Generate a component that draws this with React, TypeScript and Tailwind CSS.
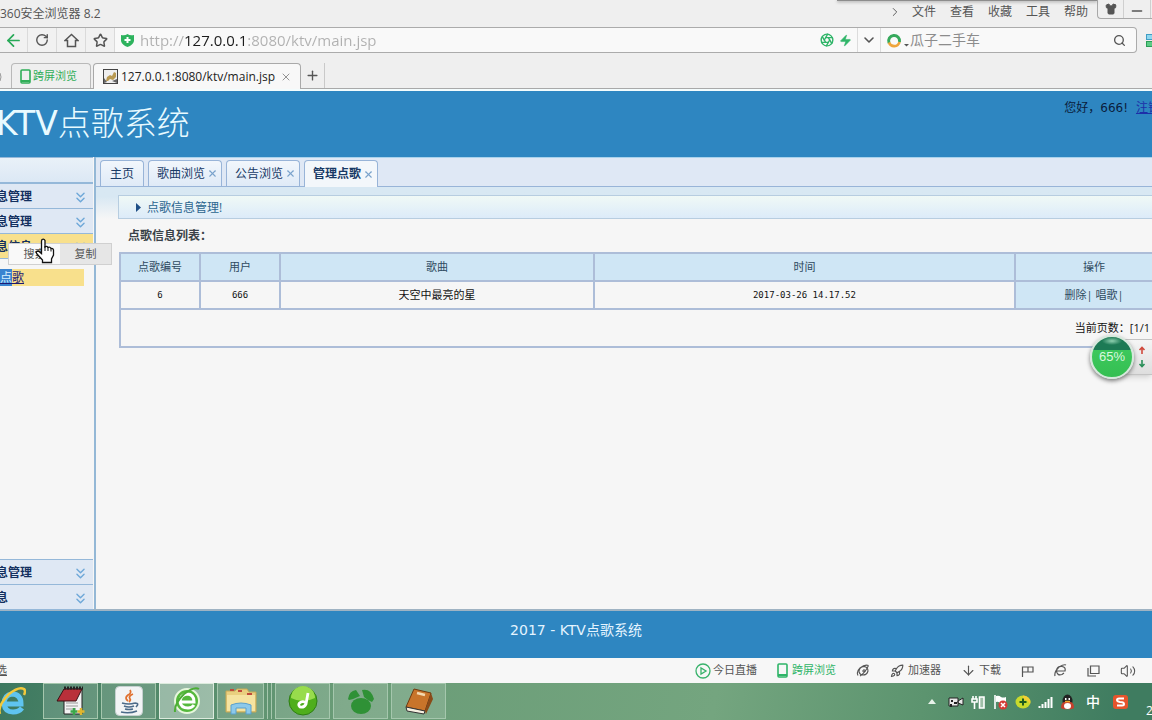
import type { ReactNode } from 'react';
import {
  Aperture, ArrowDown, ArrowLeft, ChevronDown, ChevronRight, ChevronsDown, Minus,
  Plus, Rocket, RotateCw, Search, Shirt, Star, Volume2, X, Zap,
} from 'lucide-react';

// ─────────────────────────────────────────────────────────────────────────────
// KTV song request console, shown inside a browser window on a desktop.
// ─────────────────────────────────────────────────────────────────────────────

const MENU = ['文件', '查看', '收藏', '工具', '帮助'];

const PAGE_TABS = [
  { title: '主页', closable: false },
  { title: '歌曲浏览', closable: true },
  { title: '公告浏览', closable: true },
  { title: '管理点歌', closable: true, active: true },
];

const ROWS = [{ id: '6', user: '666', song: '天空中最亮的星', time: '2017-03-26 14.17.52' }];

export default function App() {
  return (
    <div className="flex min-h-screen flex-col overflow-hidden bg-[#f6f6f6] font-['Open_Sans','Noto_Sans_CJK_SC',sans-serif] text-xs text-[#555]">
      <TitleBar />
      <AddressBar />
      <BrowserTabs />
      <PageHeader />
      <main className="relative flex flex-1 border-b-2 border-[#9fb3c3]">
        <Sidebar />
        <Workspace />
        <SpeedBall />
      </main>
      <footer className="flex h-[47px] items-start justify-center bg-[#2e86c1] pt-[9px] font-['DejaVu_Sans','Noto_Sans_CJK_SC',sans-serif] text-sm leading-5 text-[#e4f4ff]">
        2017 - KTV点歌系统
      </footer>
      <StatusBar />
      <Taskbar />
    </div>
  );
}

/* ── browser chrome ───────────────────────────────────────────────────────── */

function TitleBar() {
  return (
    <div className="relative flex h-[27px] justify-between bg-[#efefef]">
      <span className="self-center">360安全浏览器 8.2</span>
      <nav className="flex">
        <div className="flex items-center gap-[14px] pb-1 pr-[9px]">
          <ChevronRight size={14} strokeWidth={1.6} className="-mr-1" />
          {MENU.map((m) => <button key={m} type="button">{m}</button>)}
        </div>
        <div className="flex h-[19px] rounded-bl border-b border-l border-[#a8a8a8]">
          <button type="button" aria-label="皮肤" className="flex w-[26px] items-center justify-center border-r border-[#cfcfcf]">
            <Shirt size={12} fill="currentColor" />
          </button>
          <button type="button" aria-label="最小化" className="flex w-[27px] items-center justify-center border-r border-[#cfcfcf] pt-1">
            <Minus size={16} strokeWidth={2} />
          </button>
          <span className="w-px" />
        </div>
      </nav>
      <span className="absolute right-[55px] top-0 h-px w-[260px] bg-[#8d8d8d] shadow-[0_1px_3px_#777]" />
    </div>
  );
}

function NavButton({ label, children }: { label: string; children: ReactNode }) {
  return (
    <button type="button" aria-label={label} className="flex w-[29px] items-center justify-center border-r border-[#dadada] bg-[#f1f1f1]">
      {children}
    </button>
  );
}

function AddressBar() {
  return (
    <div className="flex h-[26px] bg-[#efefef]">
      <div className="flex flex-1 rounded-r-sm border-y border-r border-[#ababab] bg-[#f9f9f9]">
        <div className="-ml-px flex">
          <NavButton label="后退"><ArrowLeft size={19} strokeWidth={2.2} className="text-[#27a957]" /></NavButton>
          <NavButton label="刷新"><RotateCw size={14} strokeWidth={2.4} /></NavButton>
          <NavButton label="首页">
            <svg width="15" height="15" viewBox="0 0 15 15" fill="none" stroke="currentColor" strokeWidth="1.500">
              <path d="M1 7.500L7.500 1.500L14 7.500H11.500V13.500H3.500V7.500Z" />
            </svg>
          </NavButton>
          <NavButton label="收藏"><Star size={15} strokeWidth={2.4} /></NavButton>
        </div>
        <svg width="13" height="13" viewBox="0 0 13 13" className="ml-[6px] self-center">
          <path d="M0 1Q4 2 6.500 0Q9 2 13 1V7Q12 11 6.500 13Q1 11 0 7Z" fill="#2eb35e" />
          <path d="M6.500 3V9M3.500 6H9.500" stroke="#fff" strokeWidth="2" />
        </svg>
        <input
          aria-label="地址"
          defaultValue="http://127.0.0.1:8080/ktv/main.jsp"
          className="ml-[6px] min-w-0 flex-1 bg-[linear-gradient(90deg,#b0b0b0_45px,#1c1c1c_45px,#1c1c1c_106px,#b0b0b0_106px)] bg-clip-text text-[15px] text-transparent outline-none"
        />
        <div className="flex items-center gap-[5px] pr-[5px] text-[#2fb568]">
          <Aperture size={14} strokeWidth={2.4} />
          <Zap size={13} fill="currentColor" strokeWidth={1} />
        </div>
        <button type="button" aria-label="展开" className="flex w-6 items-center justify-center border-x border-[#dcdcdc]">
          <ChevronDown size={16} strokeWidth={2.4} />
        </button>
        <svg width="24" height="16" viewBox="0 0 24 16" className="ml-[5px] self-center">
          <path d="M3 11A5.500 5.500 0 1 1 13.500 10" fill="none" stroke="#36a95c" strokeWidth="3" />
          <path d="M3 10.500A5.500 5.500 0 0 0 13.500 10" fill="none" stroke="#efa53c" strokeWidth="2.600" />
          <path d="M18 12H23L20.500 14.500Z" fill="#555" />
        </svg>
        <input aria-label="搜索" defaultValue="瓜子二手车" className="w-[193px] bg-transparent text-sm text-[#8c8c8c] outline-none" />
        <button type="button" aria-label="开始搜索" className="flex w-[33px] items-center justify-center">
          <Search size={13} strokeWidth={2.4} />
        </button>
      </div>
      <div className="ml-[9px] flex w-[6px] flex-col justify-center gap-px">
        <span className="h-[6px] border border-r-0 border-[#3f9dc4] bg-[#8fd7ef]" />
        <span className="h-[6px] border border-r-0 border-[#2a9d56] bg-[#5ccb85]" />
      </div>
    </div>
  );
}

function PhoneIcon() {
  return (
    <svg width="11" height="15" viewBox="0 0 11 15" fill="none" stroke="currentColor">
      <rect x="1" y="1" width="9" height="13" rx="1" strokeWidth="1.600" />
      <path d="M1 12H10" strokeWidth="2" />
    </svg>
  );
}

function BrowserTabs() {
  return (
    <div className="flex h-[38px] items-end border-b-2 border-[#f3fcfd] bg-[#efefef]">
      <div className="flex h-[26px] flex-1 border-b border-[#a9a9a9]">
        <svg width="11" height="26" viewBox="0 0 11 26"><path d="M0 10Q2 14 0 18" fill="none" stroke="#999" /></svg>
        <button type="button" className="flex w-20 items-center gap-[2px] rounded-t border border-b-0 border-[#b9b9b9] px-2 text-[11px] text-[#2fae58]">
          <PhoneIcon />跨屏浏览
        </button>
        <div className="-mb-px ml-[2px] flex w-[208px] items-center rounded-t border border-b-0 border-[#a9a9a9] bg-[#f8f8f8] pl-[9px] pr-2 text-[#222]">
          <svg width="15" height="15" viewBox="0 0 15 15">
            <rect x=".5" y=".5" width="14" height="14" fill="#efefef" stroke="#444" />
            <path d="M3 12L4 8L7 6L9 7L11 3L13 4V8L10 11L7 10L5 12Z" fill="#b99a52" />
            <path d="M1 14V9L4 13ZM9 12L14 10V14Z" fill="#666" />
          </svg>
          <span className="ml-[3px] flex-1">127.0.0.1:8080/ktv/main.jsp</span>
          <button type="button" aria-label="关闭标签"><X size={12} strokeWidth={1.8} className="text-[#888]" /></button>
        </div>
        <button type="button" aria-label="新标签" className="flex w-6 items-center justify-center border-r border-[#c9c9c9]">
          <Plus size={15} strokeWidth={2.2} />
        </button>
      </div>
    </div>
  );
}

/* ── KTV page ─────────────────────────────────────────────────────────────── */

function PageHeader() {
  return (
    <header className="flex h-[66px] items-start justify-between overflow-hidden bg-[#2e86c1] font-['DejaVu_Sans','Noto_Sans_CJK_SC',sans-serif]">
      <h1 className="-ml-1 pt-[9px] text-[33px] font-light leading-[48px] text-[#e8faff]">
        <span className="font-normal">KTV</span>点歌系统
      </h1>
      <p className="-mr-2 flex gap-2 pt-[9px] leading-4 text-[#0a1c3c]">
        <span>您好，666!</span>
        <a href="#logout" className="text-[#1d2fa8] underline">注销</a>
      </p>
    </header>
  );
}

function SidebarItem({ title, active }: { title: string; active?: boolean }) {
  return (
    <button
      type="button"
      className={[
        'flex h-[25px] w-full shrink-0 items-center justify-between border-b border-[#95b8d9] pr-1 pt-[2px] font-bold text-[#14305f]',
        active ? 'bg-[#f8e08c]' : 'bg-[#dfe8f4]',
      ].join(' ')}
    >
      <span className="-ml-1">{title}</span>
      <ChevronsDown size={17} strokeWidth={2} className="text-[#6fa8d8]" />
    </button>
  );
}

function Sidebar() {
  return (
    <aside className="relative flex w-24 shrink-0 flex-col border-r-2 border-[#94b8d6]">
      <div className="mr-px flex flex-1 flex-col">
        <div className="h-[27px] border-b-2 border-t border-[#95b8d9] bg-linear-to-b from-[#e9f1f8] to-[#dce8f5]" />
        <SidebarItem title="息管理" />
        <SidebarItem title="息管理" />
        <SidebarItem title="息信息" active />
        <div className="mr-[9px] mt-[10px] flex h-[17px] items-center bg-[#f8e08c]">
          <a href="#order" className="-ml-3 text-[#1c1a72] underline">
            <span className="bg-[#3a84d0] text-[#d9f1ff]">理点</span>歌
          </a>
        </div>
        <div className="-mb-px mt-auto border-t border-[#95b8d9]">
          <SidebarItem title="息管理" />
          <SidebarItem title="息" />
        </div>
      </div>

      {/* selection popup with the pointer resting on it */}
      <div className="absolute left-2 top-[86px] z-10 flex h-[22px] w-[104px] border border-[#d0d0d0] bg-[#f9f9f9] text-[11px]">
        <button type="button" className="flex-1">搜索</button>
        <button type="button" className="flex-1 bg-[#e6e6e6]">复制</button>
      </div>
      <svg width="20" height="26" viewBox="0 0 20 26" className="absolute left-[35px] top-[81px] z-20">
        <path d="M7 1.500Q9 .5 10 2.500V9Q12 7.500 13 9.500Q15 8.500 16 10.500Q18 10 18.500 12V17L16.500 21V24.500H7.500V22L2 16Q0 13 3.500 13L6.500 15.500V3Z" fill="#fff" stroke="#111" strokeWidth="1.300" />
        <path d="M10 8V13M13 9V13M16 10.500V13.500" stroke="#111" />
      </svg>
    </aside>
  );
}

function Workspace() {
  return (
    <section className="flex min-w-0 flex-1 flex-col overflow-hidden">
      <div className="flex h-[30px] items-end gap-1 border-b border-t border-b-[#98b4d8] border-t-[#a9d2ec] bg-[#dfe8f5] pl-1">
        {PAGE_TABS.map((t) => (
          <div
            key={t.title}
            className={[
              'flex h-[26px] items-center gap-[2px] rounded-t border border-b-0 border-[#98b4d8] text-[#183a66]',
              t.closable ? 'pl-2 pr-[3px]' : 'px-[9px]',
              t.active ? '-mb-px h-[27px] bg-[#f3f7fb] font-bold' : 'bg-linear-to-b from-[#f2f7fc] to-[#dfeaf7]',
            ].join(' ')}
          >
            <button type="button">{t.title}</button>
            {t.closable && (
              <button type="button" aria-label={`关闭${t.title}`}>
                <X size={11} strokeWidth={2.4} className="text-[#7aa3cc]" />
              </button>
            )}
          </div>
        ))}
      </div>

      <div className="bg-linear-to-b from-[#d8e8f3] from-30% to-[#f6f6f6] pl-[22px] pt-2">
        <h2 className="flex h-6 items-center gap-1 border border-r-0 border-[#b7cde0] bg-linear-to-b from-[#f0f9f6] to-[#dcebf9] pl-4 pt-px text-[#2b658f]">
          <svg width="8" height="9" viewBox="0 0 8 9"><path d="M1 0L6 4.500L1 9Z" fill="#1f4f86" /></svg>
          点歌信息管理!
        </h2>
      </div>

      <div className="pl-[23px]">
        <h3 className="pb-2 pl-[9px] pt-[9px] font-bold leading-4 text-[#3a4248]">点歌信息列表：</h3>
        <table className="w-[calc(100%+22px)] table-fixed border-collapse text-center text-[11px] leading-4 text-[#111]">
          <thead>
            <tr className="h-7 bg-[#cfe6f5] text-[#2e4a60]">
              <Th width="w-[7.6%]">点歌编号</Th>
              <Th width="w-[7.6%]">用户</Th>
              <Th width="w-[29.8%]">歌曲</Th>
              <Th width="w-[40%]">时间</Th>
              <Th width="w-[15%]">操作</Th>
            </tr>
          </thead>
          <tbody>
            {ROWS.map((r) => (
              <tr key={r.id} className="h-7">
                <td className="border-2 border-[#adbdd8] font-['DejaVu_Sans_Mono',monospace] text-[9px]">{r.id}</td>
                <td className="border-2 border-[#adbdd8] font-['DejaVu_Sans_Mono',monospace] text-[9px]">{r.user}</td>
                <td className="border-2 border-[#adbdd8]">{r.song}</td>
                <td className="border-2 border-[#adbdd8] font-['DejaVu_Sans_Mono',monospace] text-[9px]">{r.time}</td>
                <td className="border-2 border-[#adbdd8] bg-[#cfe6f5] text-[#2e4a60]">
                  <a href="#delete">删除</a>| <a href="#sing">唱歌</a>|
                </td>
              </tr>
            ))}
            <tr className="h-[38px]">
              <td colSpan={5} className="border-2 border-[#adbdd8] pr-[22px] text-right">当前页数：[1/1</td>
            </tr>
          </tbody>
        </table>
      </div>
    </section>
  );
}

function Th({ width, children }: { width: string; children: ReactNode }) {
  return <th className={`${width} border-2 border-[#adbdd8] font-normal`}>{children}</th>;
}

/* floating memory ball with the up / down traffic plate behind it */
function SpeedBall() {
  return (
    <div className="absolute right-0 top-[178px] flex h-11 w-[62px] items-center">
      <div className="flex h-9 w-full flex-col items-end justify-center border-y border-[#c4c4c4] bg-linear-to-b from-[#f5f5f5] to-[#dedede] pr-[6px] shadow-md [clip-path:inset(0_0_-8px_30px)]">
        <svg width="8" height="24" viewBox="0 0 8 24" fill="none" strokeWidth="1.600">
          <path d="M4 9V3M1.500 5L4 2.500L6.500 5" stroke="#d0493c" />
          <path d="M4 15V21M1.500 19L4 21.500L6.500 19" stroke="#2a8f59" />
        </svg>
      </div>
      <div className="absolute left-0 top-0 flex size-11 items-center justify-center rounded-full border-2 border-[#d6e8dc] bg-[radial-gradient(ellipse_10px_4px_at_50%_10%,#8fd0b0,transparent),linear-gradient(#1d7a55_32%,#3cc85c_33%,#35bf52)] font-['Liberation_Sans',sans-serif] text-[13px] text-[#d9f8df] shadow-[0_2px_4px_#777]">
        65%
      </div>
    </div>
  );
}

/* ── status bar and desktop taskbar ───────────────────────────────────────── */

function StatusBar() {
  return (
    <div className="flex h-[25px] items-center justify-between overflow-hidden bg-[#f7f7f7] text-[11px] text-[#555]">
      <span className="-ml-1 underline">选</span>
      <div className="flex items-center gap-5 pr-4">
        <button type="button" className="flex items-center gap-[2px]">
          <svg width="16" height="16" viewBox="0 0 16 16" fill="none" stroke="#38b26b" strokeWidth="1.300">
            <circle cx="8" cy="8" r="7" />
            <path d="M6 5V11L11 8Z" />
          </svg>
          今日直播
        </button>
        <button type="button" className="flex items-center gap-1 text-[#2fb568]"><PhoneIcon />跨屏浏览</button>
        <button type="button" aria-label="医生">
          <svg width="14" height="13" viewBox="0 0 14 13" fill="none" stroke="currentColor" strokeWidth="1.100">
            <path d="M2 11.500Q0 8 4 4Q9 0 12.500 1.500M3 8Q3 3 8 2.500Q12 3 12 7Q11 11 7 11Q4 11 3 8ZM4 12Q9 9 12.500 1.500M6 7H10M8 5V9" />
          </svg>
        </button>
        <button type="button" className="flex items-center gap-1"><Rocket size={14} strokeWidth={2} />加速器</button>
        <button type="button" className="flex items-center gap-[3px]"><ArrowDown size={15} strokeWidth={1.8} />下载</button>
        <button type="button" aria-label="标记">
          <svg width="13" height="12" viewBox="0 0 13 12" fill="none" stroke="currentColor" strokeWidth="1.200">
            <path d="M1.500 12V2H7V7H1.500M7 2H12V7H7" />
          </svg>
        </button>
        <button type="button" aria-label="内核">
          <svg width="13" height="13" viewBox="0 0 13 13" fill="none" stroke="currentColor" strokeWidth="1.200">
            <path d="M3 7H11Q12 3 8 2.500Q3 2 2.500 7Q3 12 8 10.500L10 9M1 12Q0 8 5 3Q10 0 12 1" />
          </svg>
        </button>
        <button type="button" aria-label="窗口">
          <svg width="13" height="12" viewBox="0 0 13 12" fill="none" stroke="currentColor" strokeWidth="1.200">
            <path d="M3.500 1H12V8.500H3.500ZM1 3V11H9" />
          </svg>
        </button>
        <button type="button" aria-label="声音"><Volume2 size={16} strokeWidth={1.6} /></button>
      </div>
    </div>
  );
}

function TaskButton({ label, active, children }: { label: string; active?: boolean; children: ReactNode }) {
  return (
    <button
      type="button"
      aria-label={label}
      className={[
        'flex h-9 w-[55px] items-center justify-center border',
        active ? 'border-[#dcebdd] bg-white/40' : 'border-[#a5c7ad] bg-white/15',
      ].join(' ')}
    >
      {children}
    </button>
  );
}

function Taskbar() {
  return (
    <div className="flex h-[37px] justify-between overflow-hidden bg-[linear-gradient(100deg,#3c7860_0%,#4b8366_8%,#6a9c77_30%,#74a57f_62%,#5c946f_80%,#3f7c60_97%)]">
      <div className="flex gap-[3px]">
        <div className="flex w-10 items-center">
          <svg width="26" height="32" viewBox="0 0 26 32" fill="none">
            <path d="M3 18H21Q21 8 12 8Q4 9 4 18Q5 26 13 26Q19 26 22 22" stroke="#5fc4f0" strokeWidth="5" />
            <path d="M0 28Q-3 20 9 8Q19 0 24 3Q26 5 24 9" stroke="#f2c93c" strokeWidth="2.500" />
          </svg>
        </div>
        <TaskButton label="记事本">
          <svg width="30" height="32" viewBox="0 0 30 32">
            <path d="M8 4H26V29H8Z" fill="#f3f3f3" stroke="#222" />
            <path d="M10 18H22M10 21H22M10 24H20" stroke="#999" />
            <path d="M8 4H26L20 16H1Z" fill="#b9303a" stroke="#3a1115" />
            <path d="M8 3H27" stroke="#222" strokeWidth="3" strokeDasharray="2 1" />
            <path d="M18 23V30M14.500 26.500H21.500" stroke="#3aa84a" strokeWidth="2.500" />
            <path d="M25 23V30M21.500 26.500H28.500" stroke="#e0b62e" strokeWidth="2.500" />
          </svg>
        </TaskButton>
        <TaskButton label="Java">
          <svg width="28" height="30" viewBox="0 0 28 30" fill="none">
            <rect x=".5" y=".5" width="27" height="29" rx="4" fill="#f2f4f5" stroke="#c6d0d0" />
            <path d="M15 4Q17 7 13 9Q9 12 13 15M18 8Q13 10 15 13Q16 14 14 16" stroke="#e0702e" strokeWidth="1.800" />
            <path d="M7 17Q14 19 20 17M9 20Q14 22 19 20M10 23Q14 24 18 23M6 26Q14 28 22 25M20 17Q25 17 21 21" stroke="#4b6a88" strokeWidth="1.600" />
          </svg>
        </TaskButton>
        <TaskButton label="浏览器" active>
          <svg width="28" height="30" viewBox="0 0 28 30" fill="none">
            <circle cx="14" cy="15" r="12" fill="#55b83c" stroke="#e6f7dc" strokeWidth="2" />
            <path d="M8 16H21Q21 8 14 8Q7 9 7 16Q8 22 15 22Q19 22 21 19" stroke="#fff" strokeWidth="3" />
            <path d="M2 26Q1 18 11 8Q21 0 26 3" stroke="#4cae35" strokeWidth="2" />
          </svg>
        </TaskButton>
        <div className="flex w-[55px] gap-[2px]">
          <button type="button" aria-label="文件夹" className="flex h-9 flex-1 items-center justify-center border border-[#a5c7ad] bg-white/15">
            <svg width="32" height="28" viewBox="0 0 32 28">
              <path d="M1 4H10L12 2H22L24 5H31V25H1Z" fill="#e9cf7f" stroke="#c5a856" />
              <path d="M2 8H30V24H2Z" fill="#f5e3a0" />
              <path d="M5 3H9M13 4H17M22 7H27" stroke="#c04a3a" strokeWidth="2" />
              <path d="M6 27V18Q16 14 26 18V27H21V21H11V27Z" fill="#8cc9ea" stroke="#5aa0cc" />
            </svg>
          </button>
          <span className="h-9 w-[2px] border-r border-[#a5c7ad]" />
          <span className="h-9 w-[2px] border-r border-[#a5c7ad]" />
        </div>
        <TaskButton label="音乐">
          <svg width="30" height="30" viewBox="0 0 30 30" fill="none">
            <circle cx="15" cy="15" r="14" fill="#4fae1c" stroke="#2f7f14" />
            <path d="M3 12A12 12 0 0 1 27 12Q15 18 3 12Z" fill="#98dc4c" />
            <path d="M20 7L18 18Q16 22 12 21Q9 18 13 16Q16 15 18 17" stroke="#fff" strokeWidth="2.800" />
          </svg>
        </TaskButton>
        <TaskButton label="青蛙">
          <svg width="28" height="26" viewBox="0 0 28 26" fill="#2f9136">
            <ellipse cx="14" cy="18" rx="10" ry="8" />
            <path d="M1 11Q2 3 9 2L13 8Q7 11 2 12ZM15 2Q24 0 27 11L25 14Q20 12 17 9Z" />
          </svg>
        </TaskButton>
        <TaskButton label="词典">
          <svg width="30" height="28" viewBox="0 0 30 28">
            <path d="M10 2L27 6L21 24L2 20Z" fill="#c8742a" stroke="#6f3a10" />
            <path d="M2 20L21 24L20 27L3 24Z" fill="#f6f0e0" stroke="#333" />
            <path d="M27 6L29 12L22 27L21 24Z" fill="#8a4a18" />
            <path d="M13 6L21 8" stroke="#f3d9b0" strokeWidth="2.500" />
          </svg>
        </TaskButton>
      </div>
      <Tray />
    </div>
  );
}

function Tray() {
  return (
    <div className="flex items-center gap-[7px] text-white">
      <svg width="8" height="5" viewBox="0 0 8 5" className="mr-[5px]"><path d="M0 5L4 0L8 5Z" fill="#e8f3ea" /></svg>
      <svg width="16" height="14" viewBox="0 0 16 14">
        <path d="M1 3H10V11H1ZM10 6L15 3V10L10 8Z" fill="#e8e8e8" stroke="#222" />
        <path d="M3 5H5V7H3ZM6 7H9V9H6ZM2 9H4V12H2Z" fill="#222" />
      </svg>
      <svg width="15" height="16" viewBox="0 0 15 16" fill="none" stroke="#fff" strokeWidth="1.600">
        <path d="M8.500 3H13V14H8.500Z" fill="#9fbfa8" />
        <path d="M1 5H6V8H1ZM2 2V5M5 2V5M3.500 8V15" />
      </svg>
      <svg width="15" height="16" viewBox="0 0 15 16" fill="none">
        <path d="M2 1V15" stroke="#fff" strokeWidth="1.600" />
        <path d="M3 2Q6 1 8 3Q10 4 13 3V9Q9 10 7 9Q5 7 3 8Z" fill="#fff" />
        <circle cx="10" cy="11" r="4.500" fill="#d43a36" />
        <path d="M8 9L12 13M12 9L8 13" stroke="#fff" strokeWidth="1.500" />
      </svg>
      <svg width="16" height="14" viewBox="0 0 16 14">
        <ellipse cx="8" cy="7" rx="7.500" ry="6.500" fill="#c9da2c" />
        <path d="M8 .5A7.500 6.500 0 0 1 15 9Q13 5 8 4Z" fill="#f3ce35" />
        <path d="M8 3.500V10.500M4.500 7H11.500" stroke="#1d5a1e" strokeWidth="2" />
      </svg>
      <svg width="15" height="12" viewBox="0 0 15 12" stroke="#fff" strokeWidth="2">
        <path d="M1.500 12V10M4.500 12V8M7.500 12V6M10.500 12V3M13.500 12V1" />
      </svg>
      <svg width="15" height="16" viewBox="0 0 15 16">
        <ellipse cx="7.500" cy="7" rx="5" ry="6.500" fill="#222" />
        <path d="M1 14Q1 9 4 8H11Q14 9 14 14Q11 16 7.500 15Q4 16 1 14Z" fill="#c5402c" />
        <ellipse cx="7.500" cy="12" rx="3.500" ry="3" fill="#fff" />
        <path d="M5 4H6.500V6H5ZM8.500 4H10V6H8.500Z" fill="#fff" />
        <path d="M5 7.500H10" stroke="#f0a52c" strokeWidth="1.500" />
      </svg>
      <span className="ml-1 text-sm font-medium leading-4">中</span>
      <svg width="15" height="14" viewBox="0 0 15 14" className="ml-[6px]">
        <rect width="15" height="14" rx="3" fill="#e5542c" />
        <path d="M11 3.500H6Q4 3.500 4 5Q4 6.500 7 7Q11 7 11 9Q11 10.500 9 10.500H4" fill="none" stroke="#fff" strokeWidth="2" />
      </svg>
      <span className="ml-[11px] w-[6px] self-end overflow-hidden pb-[1px] leading-4">2</span>
    </div>
  );
}
